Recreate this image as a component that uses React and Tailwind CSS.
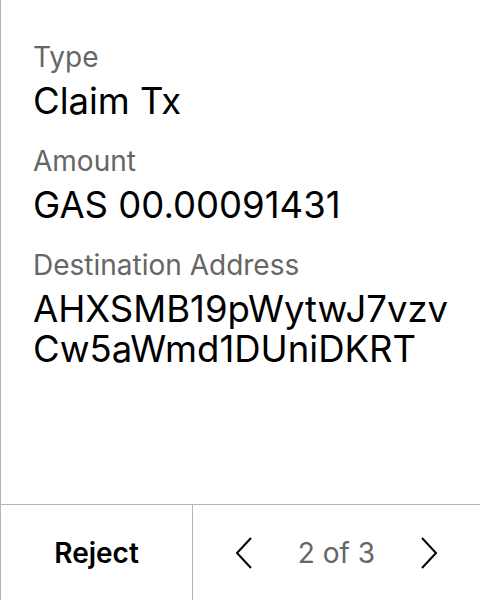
export default function App() {
  const fields = [
    { label: 'Type', value: ['Claim Tx'] },
    { label: 'Amount', value: ['GAS 00.00091431'] },
    { label: 'Destination Address', value: ['AHXSMB19pWytwJ7vzv', 'Cw5aWmd1DUniDKRT'] },
  ];

  return (
    <div
      className="flex h-[600px] w-[480px] flex-col border-l border-[#b5b5b5] bg-white text-black"
      style={{ fontFamily: 'Inter, "Noto Sans", sans-serif' }}
    >
      <div className="flex flex-1 flex-col gap-6 px-8 pt-[41px]">
        {fields.map((f) => (
          <div key={f.label} className="flex flex-col gap-2">
            <div className="text-[28px] leading-8 text-[#666666]">{f.label}</div>
            <div className="text-[36.5px] leading-10">
              {f.value.map((line) => (
                <div key={line}>{line}</div>
              ))}
            </div>
          </div>
        ))}
      </div>

      <div className="flex h-[96px] border-t border-[#b5b5b5]">
        <button className="flex w-[192px] items-center justify-center border-r border-[#b5b5b5] text-[28px] font-semibold">
          Reject
        </button>
        <div className="flex flex-1 items-center justify-between px-[42px]">
          <svg width="18" height="32" viewBox="0 0 18 32" fill="none" stroke="black" strokeWidth="2">
            <path d="M16 1 L2 16 L16 31" />
          </svg>
          <span className="text-[28px] text-[#666666]">2 of 3</span>
          <svg width="18" height="32" viewBox="0 0 18 32" fill="none" stroke="black" strokeWidth="2">
            <path d="M2 1 L16 16 L2 31" />
          </svg>
        </div>
      </div>
    </div>
  );
}
